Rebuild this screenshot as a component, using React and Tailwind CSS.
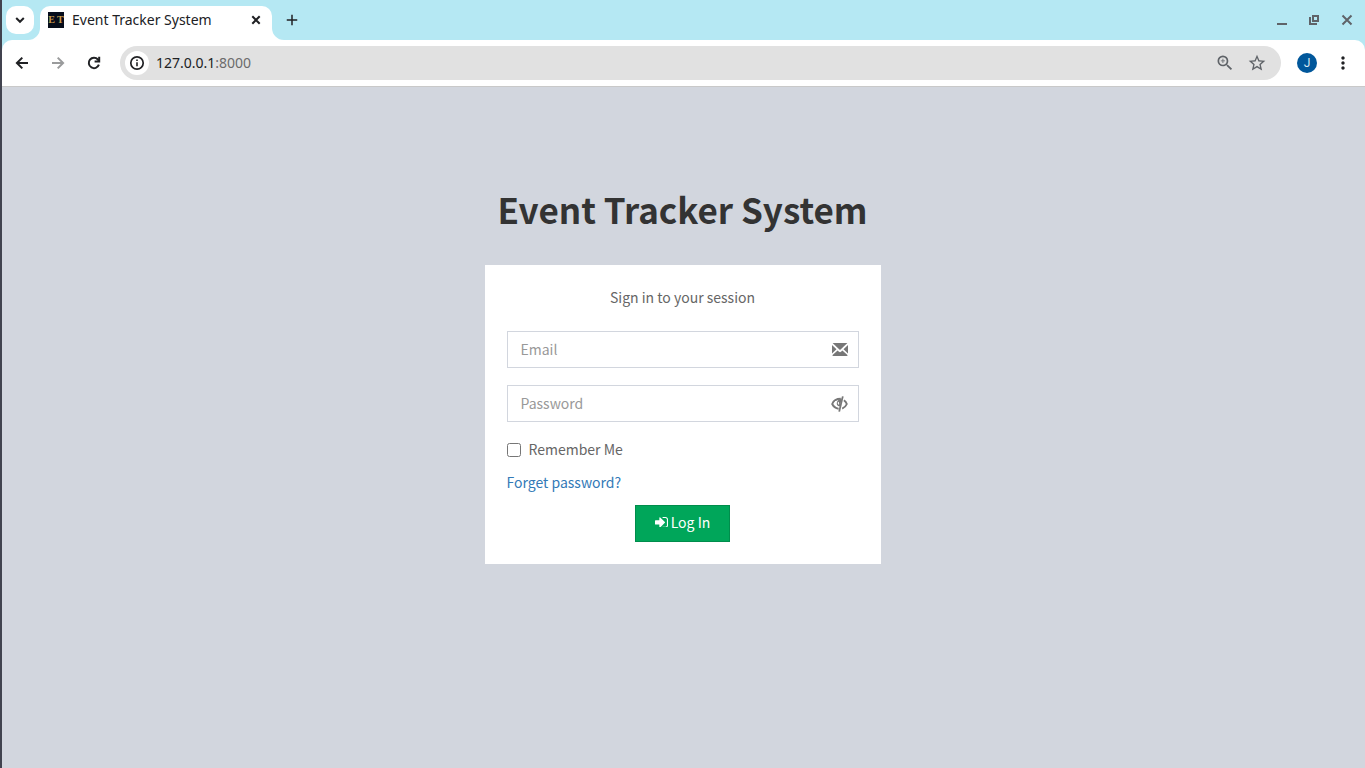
import React from "react";
import { MdZoomIn, MdStarBorder, MdMoreVert, MdAdd } from "react-icons/md";

function LineIcon({ d, children }) {
  return (
    <svg viewBox="0 0 16 16" className="size-4" fill="none" stroke="currentColor" strokeWidth="2" aria-hidden="true">
      <path d={d} />
      {children}
    </svg>
  );
}

function EnvelopeIcon() {
  return (
    <svg viewBox="0 0 16 13" className="h-[13px] w-4" fill="currentColor" aria-hidden="true">
      <path d="M.6 0h14.800L8.600 6.600a.9.9 0 0 1-1.200 0z" />
      <path d="M0 2.100 4.500 6.300 0 10.400zM16 2.100v8.300l-4.500-4.100z" />
      <path d="M.6 13v-.9l5-4.700 1.400 1.300a1.450 1.450 0 0 0 2 0l1.400-1.300 5 4.700v.9z" />
    </svg>
  );
}

function EyeCloseIcon() {
  return (
    <svg viewBox="0 0 17 16" className="h-4 w-[17px]" fill="none" stroke="currentColor" aria-hidden="true">
      <path d="M9.800 2.800C5 2.800 2.200 5.400 1.200 8c1.100 2.400 3.200 4.200 6.400 4.700" strokeWidth="1.900" />
      <path d="M10.800 2.500 8.800 10.600C6.400 10.400 5.600 8.800 5.700 7.200 5.800 5.200 7.600 3 10.800 2.500z" fill="currentColor" stroke="none" />
      <path d="M4.600 5.200C3.900 7.500 5 10.300 7.800 11" stroke="#fff" strokeWidth="1.200" />
      <path d="M7.600 6c-.6.900-.3 1.800.5 2.200" stroke="#fff" strokeWidth="1.100" />
      <path d="M11.800.4 8.200 15.600" strokeWidth="1.800" />
      <path d="M12.900 4.200c1.500 1 2.400 2.300 2.900 3.800-.8 2-2.300 3.700-4.600 4.600" strokeWidth="1.900" />
    </svg>
  );
}

function SignInIcon() {
  return (
    <svg viewBox="0 0 1536 1280" className="w-[13px]" fill="currentColor" aria-hidden="true">
      <path d="M1184 640q0 26-19 45l-544 544q-19 19-45 19t-45-19-19-45v-288h-448q-26 0-45-19t-19-45v-384q0-26 19-45t45-19h448v-288q0-26 19-45t45-19 45 19l544 544q19 19 19 45zm352-352v704q0 119-84.500 203.500t-203.500 84.500h-320q-13 0-22.500-9.500t-9.500-22.500q0-4-1-20t-.5-26.500 3-23.500 10-19.500 20.500-6.500h320q66 0 113-47t47-113v-704q0-66-47-113t-113-47h-312l-11.500-1-11.500-3-8-5.500-7-9-2-13.500q0-4-1-20t-.5-26.500 3-23.500 10-19.500 20.500-6.500h320q119 0 203.500 84.500t84.500 203.500z" />
    </svg>
  );
}

function TabFoot({ flip }) {
  return (
    <svg viewBox="0 0 12 12" className="size-3 self-end" fill="#fff" aria-hidden="true">
      <path d={flip ? "M0 0v12h12A12 12 0 0 1 0 0z" : "M12 0v12H0A12 12 0 0 0 12 0z"} />
    </svg>
  );
}

function TabStrip() {
  return (
    <div className="flex h-10 items-stretch pl-1">
      <button aria-label="Search tabs" className="mt-1.5 flex size-7 items-center justify-center rounded-[10px] bg-white text-[#202124]">
        <LineIcon d="m4.200 6 3.800 3.800L11.800 6" />
      </button>
      <div className="-ml-1.5 flex pt-1.5">
        <TabFoot />
        <div className="flex h-[34px] w-58 items-center rounded-t-[10px] bg-white pr-2 pb-1.5 pl-2">
          <span className="flex size-4 items-center justify-center gap-0.5 bg-[#060d1b] font-['Liberation_Serif',serif] text-[10px] leading-none font-bold text-[#c79a4c]">
            <span>E</span>
            <span>T</span>
          </span>
          <span className="ml-2 flex-1 text-sm whitespace-nowrap">Event Tracker System</span>
          <button aria-label="Close tab" className="flex size-4 items-center justify-center">
            <LineIcon d="m4.300 4.300 7.400 7.400M11.700 4.300l-7.400 7.400" />
          </button>
        </div>
        <TabFoot flip />
      </div>
      <button aria-label="New tab" className="flex w-4 items-center justify-center">
        <MdAdd className="size-[18px] shrink-0" />
      </button>
      <div className="ml-auto flex items-center gap-5 pr-3 text-[#5f6368]">
        <button aria-label="Minimize" className="h-4 w-3">
          <svg viewBox="0 0 12 16" className="h-4 w-3" fill="currentColor">
            <path d="M0 11h10v2H0z" />
          </svg>
        </button>
        <button aria-label="Restore" className="h-4 w-3">
          <svg viewBox="0 0 12 16" className="h-4 w-3" fill="none" stroke="currentColor" strokeWidth="2">
            <path d="M4 4h5v5H4z" />
            <path d="M1 5v7h7" />
          </svg>
        </button>
        <button aria-label="Close window" className="h-4 w-3">
          <svg viewBox="0 0 12 16" className="h-4 w-3" fill="none" stroke="currentColor" strokeWidth="2">
            <path d="m1.500 3.500 9 9M10.500 3.500l-9 9" />
          </svg>
        </button>
      </div>
    </div>
  );
}

function Toolbar() {
  return (
    <div className="flex h-[47px] items-center rounded-t-[10px] border-b border-[#c9c9c9] bg-white pr-3 pl-3">
      <button aria-label="Back" className="mr-5">
        <LineIcon d="M14 8H3M8.300 2.600 2.900 8l5.400 5.400" />
      </button>
      <button aria-label="Forward" className="mr-5 text-[#9a9b9c]">
        <LineIcon d="M2 8h11M7.700 2.600 13.100 8l-5.400 5.400" />
      </button>
      <button aria-label="Reload" className="mr-[18px]">
        <LineIcon d="M12.900 9.700A5.200 5.200 0 1 1 11.900 4.500L13 5.700">
          <path d="M13.200 1.800V6.400H8.600" />
        </LineIcon>
      </button>
      <div className="flex h-[34px] flex-1 items-center rounded-full bg-[#e1e1e1] pr-3.5 pl-[5px]">
        <button aria-label="View site information" className="flex size-6 shrink-0 items-center justify-center rounded-full bg-white">
          <svg viewBox="0 0 16 16" className="size-4" aria-hidden="true">
            <circle cx="8" cy="8" r="6.200" fill="none" stroke="currentColor" strokeWidth="1.700" />
            <path d="M7.200 7.300h1.600v4H7.200zM7.200 4.500h1.600v1.600H7.200z" fill="currentColor" />
          </svg>
        </button>
        <div className="ml-[7px] flex-1 text-sm">
          127.0.0.1<span className="text-[#6b6b6b]">:8000</span>
        </div>
        <button aria-label="Zoom" className="mr-3 text-[#5f6368]">
          <MdZoomIn className="size-5" />
        </button>
        <button aria-label="Bookmark this page" className="text-[#5f6368]">
          <MdStarBorder className="size-5" />
        </button>
      </div>
      <button className="ml-4 flex size-5 items-center justify-center rounded-full bg-[#01579b] font-['Roboto',sans-serif] text-xs leading-none text-[#d8e6f1]">
        J
      </button>
      <button aria-label="Menu" className="ml-4">
        <MdMoreVert className="size-5" />
      </button>
    </div>
  );
}

function Field({ id, type, placeholder, icon }) {
  return (
    <div className="relative">
      <input
        id={id}
        type={type}
        aria-label={placeholder}
        placeholder={placeholder}
        className="block h-[37px] w-full border border-[#d2d6de] bg-white pr-11 pb-0.5 pl-[13px] text-[#555] placeholder-[#999] outline-none focus:border-[#3c8dbc]"
      />
      <span className="absolute inset-y-0 right-0 flex w-[38px] items-center justify-center text-[#777]">{icon}</span>
    </div>
  );
}

export default function App() {
  return (
    <div className="flex min-h-screen flex-col border-l-2 border-[#41434f] bg-[#b5e8f3] font-['Noto_Sans',sans-serif] text-[#202124]">
      <header>
        <TabStrip />
        <Toolbar />
      </header>
      <main className="flex flex-1 flex-col items-center bg-[#d2d6de] pt-[95px] pr-4 pb-8 pl-3.5 font-['Noto_Sans_CJK_SC',sans-serif] text-sm text-[#666]">
        <h1 className="text-center text-[35px] leading-[54px] font-bold text-[#333]">Event Tracker System</h1>
        <form className="mt-[29px] w-full max-w-99 bg-white p-[22px]" onSubmit={(e) => e.preventDefault()}>
          <p className="text-center leading-5">Sign in to your session</p>
          <div className="mt-6 flex flex-col gap-[17px]">
            <Field id="email" type="email" placeholder="Email" icon={<EnvelopeIcon />} />
            <Field id="password" type="password" placeholder="Password" icon={<EyeCloseIcon />} />
          </div>
          <div className="mt-[17px] flex items-center gap-2">
            <input id="remember" type="checkbox" className="size-3.5" />
            <label htmlFor="remember" className="pb-0.5 leading-5">Remember Me</label>
          </div>
          <a href="#forgot" className="mt-[11px] block w-fit leading-5 text-[#337ab7]">
            Forget password?
          </a>
          <button type="submit" className="mx-auto mt-[13px] flex h-[37px] w-[95px] items-center justify-center gap-[3px] border border-[#008d4c] bg-[#00a65a] pb-[3px] text-white">
            <SignInIcon />
            Log In
          </button>
        </form>
      </main>
    </div>
  );
}
